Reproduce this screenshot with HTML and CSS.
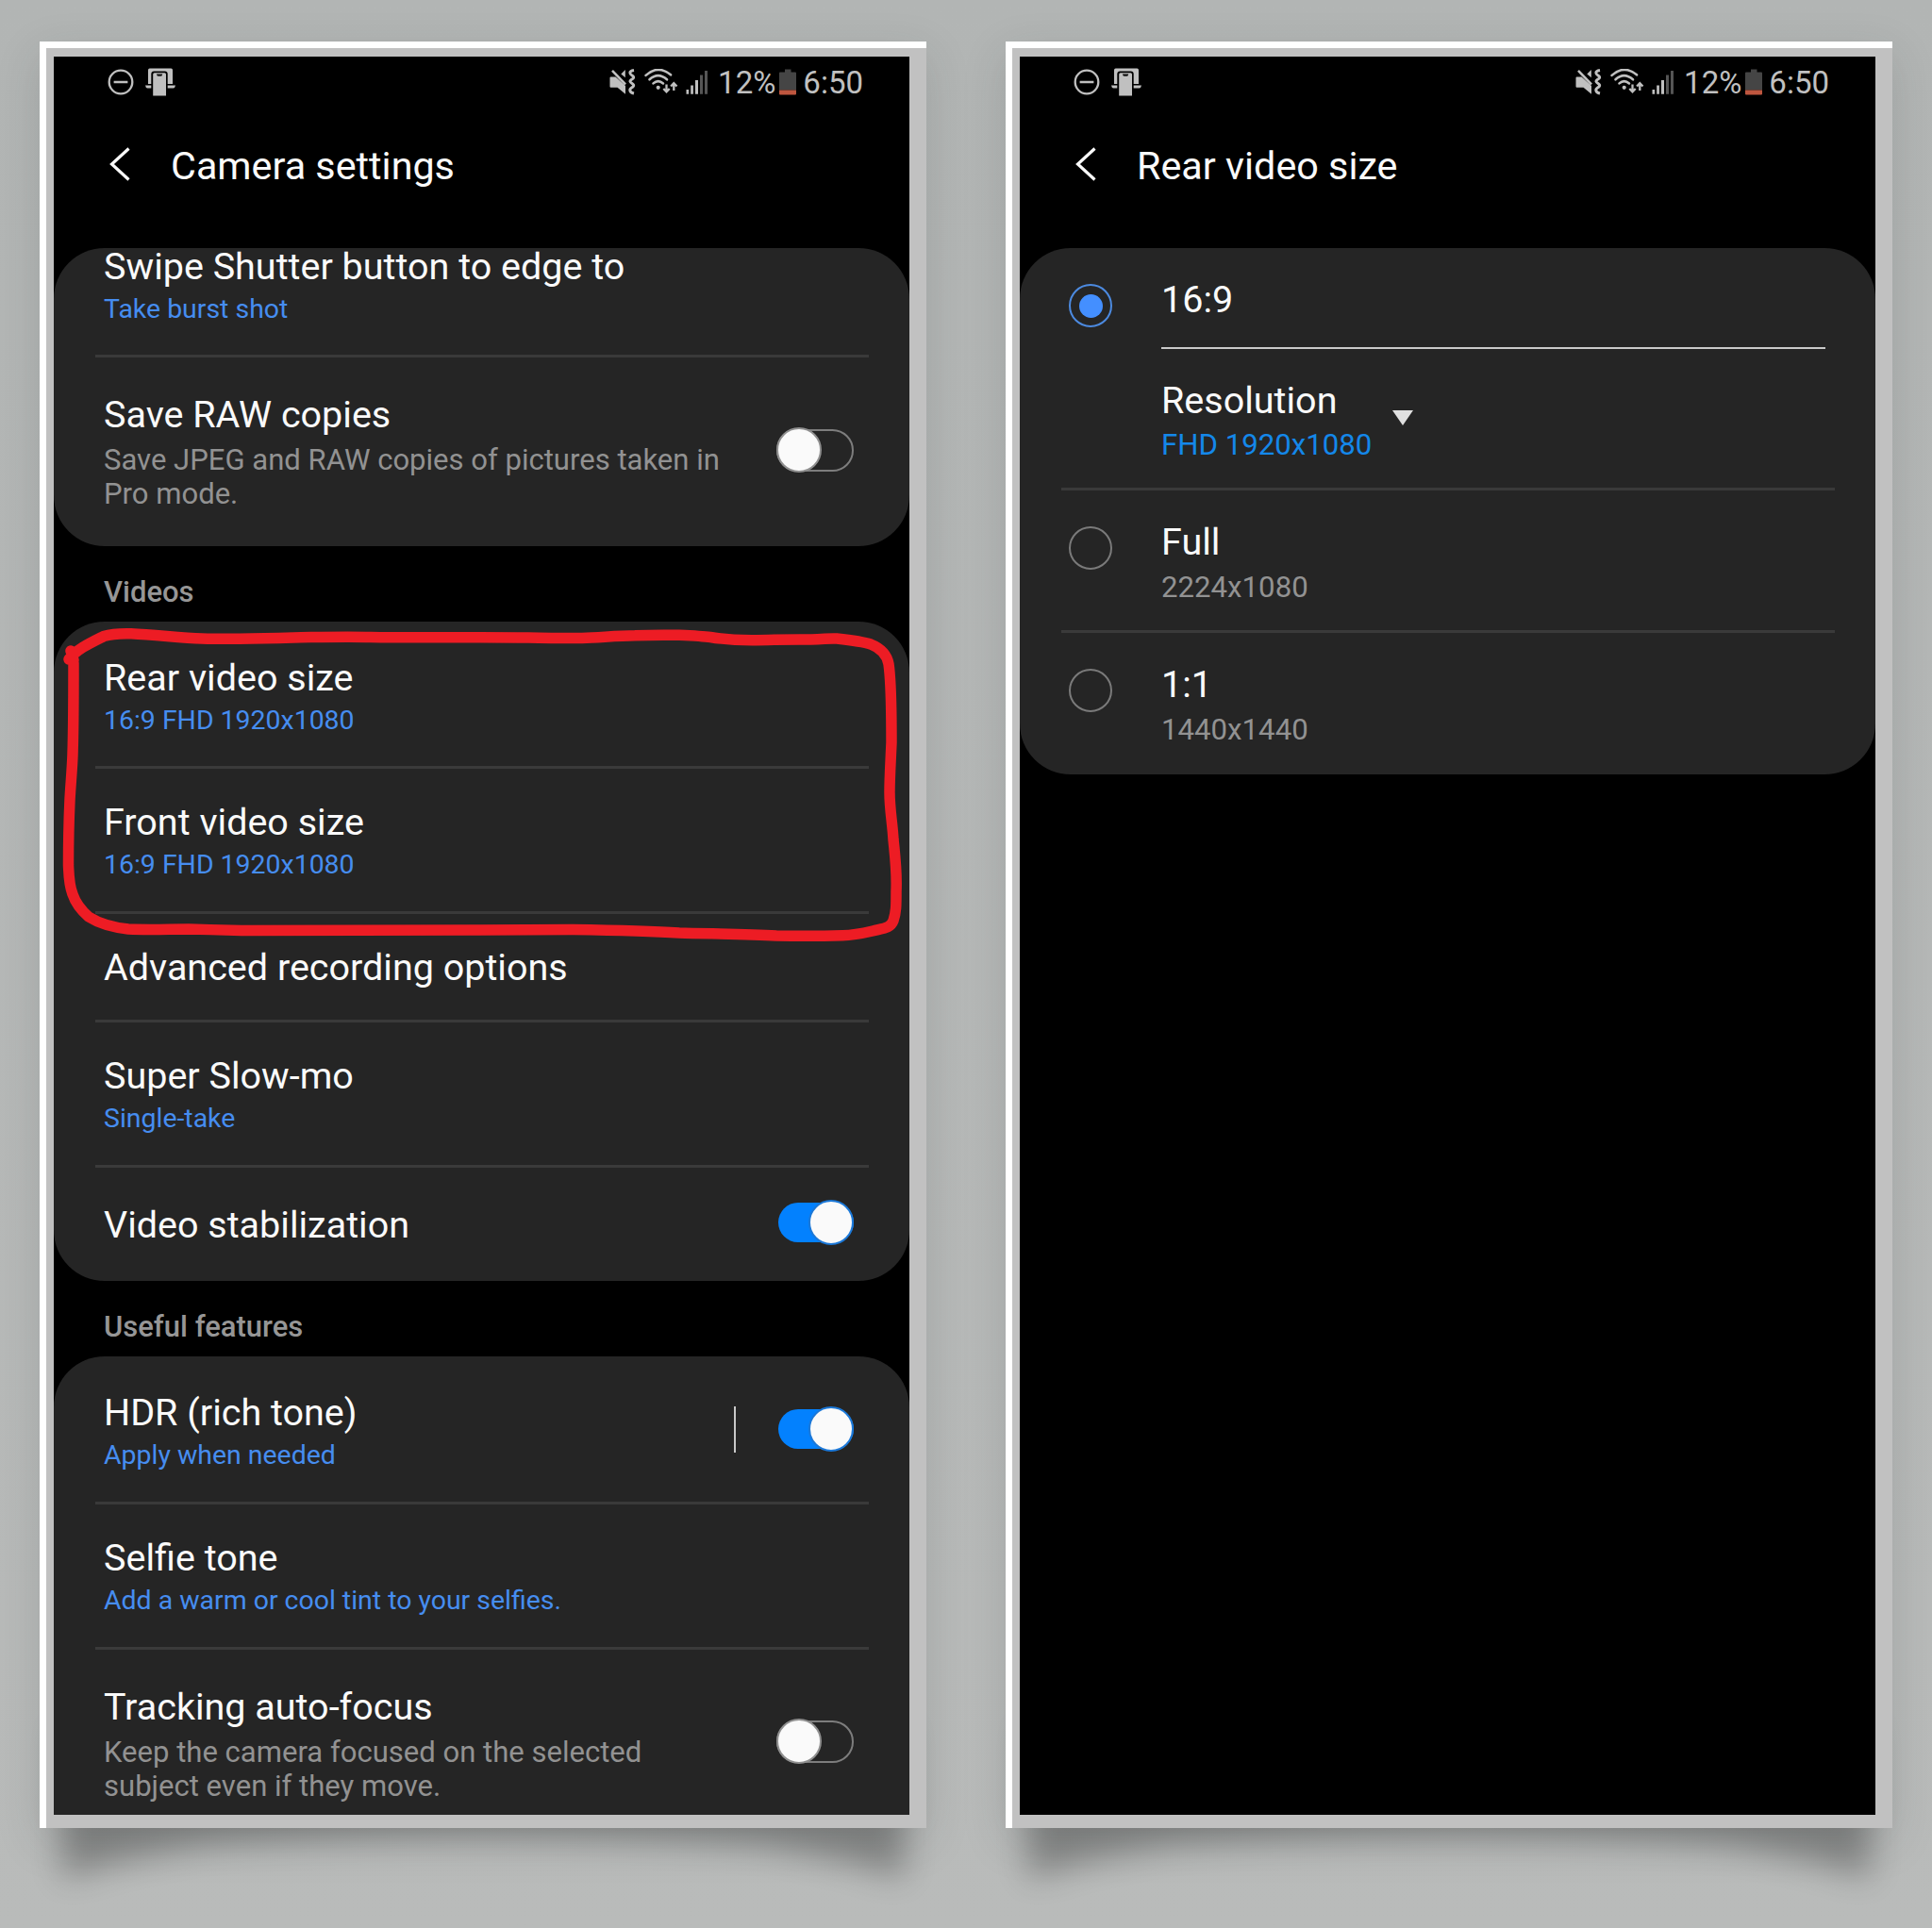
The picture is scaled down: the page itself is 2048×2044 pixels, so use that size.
FILE: index.html
```html
<!DOCTYPE html>
<html lang="en">
<head>
<meta charset="utf-8">
<title>Camera settings</title>
<link rel="stylesheet" href="styles.css">
</head>
<body>
<svg class="defs" width="0" height="0" aria-hidden="true">
  <defs>
    <filter id="soft" x="-20%" y="-50%" width="140%" height="200%"><feGaussianBlur stdDeviation="17"/></filter>
    <symbol id="i-dnd" viewBox="0 0 28 28">
      <circle cx="14" cy="14" r="12.3" fill="none" stroke="currentColor" stroke-width="2.3"/>
      <path d="M6.6 14h14.8" stroke="currentColor" stroke-width="2.5"/>
    </symbol>
    <symbol id="i-link" viewBox="0 0 32 30">
      <path d="M3 2.200Q3 0.500 4.700 0.500H27.300Q29 0.500 29 2.200V17H3Z" fill="currentColor"/>
      <path d="M0 18.500H32Q31.500 21.500 29.700 21.500H2.300Q0.500 21.500 0 18.500Z" fill="currentColor"/>
      <path d="M6.300 30V6.500Q6.300 3.500 9.200 3.500H20.800Q23.700 3.500 23.700 6.500V30Z" fill="#000"/>
      <path d="M8.200 29.500V6.800Q8.200 5.300 9.700 5.300H20.500Q22 5.300 22 6.800V29.500Z" fill="currentColor"/>
      <path d="M12 6.500H18.200Q18 8.800 16.500 8.800H13.700Q12.200 8.800 12 6.500Z" fill="#111"/>
    </symbol>
    <symbol id="i-mute" viewBox="0 0 28 28">
      <path d="M1.500 8.500H6.500L17 18V26.800L8.500 19.800H1.500Q0.500 19.800 0.500 18.800V9.500Q0.500 8.500 1.500 8.500Z" fill="currentColor"/>
      <path d="M16.800 1V9.300L12.300 5.600Z" fill="currentColor"/>
      <path d="M3 1.800L17 16.500" stroke="currentColor" stroke-width="2.600"/>
      <path d="M26 1.500C20 2.500 21.500 5.500 24 7C27 9 25.500 10 23.500 11.200C21 12.700 21.500 14 24 15.500C27 17.300 25.500 18.800 23.500 20C20.500 22 21.500 25 26 26" fill="none" stroke="currentColor" stroke-width="2.900"/>
    </symbol>
    <symbol id="i-wifi" viewBox="0 0 36 28">
      <g fill="none" stroke="currentColor" stroke-width="2.600" stroke-linecap="round">
        <path d="M1.600 6.900Q14.500 -4.800 28 6.300"/>
        <path d="M5.500 11.300Q14.500 3 24 11.300"/>
        <path d="M9.500 15.400Q14.700 10.800 20 15.400"/>
      </g>
      <circle cx="14.700" cy="19.800" r="2.100" fill="currentColor"/>
      <path d="M23.500 16.500v8M20.300 21l3.200 3.400L26.700 21M31.300 23v-8M28.100 18.500l3.200-3.400L34.500 18.500" fill="none" stroke="currentColor" stroke-width="2.300"/>
    </symbol>
    <symbol id="i-signal" viewBox="0 0 24 28">
      <path d="M.5 22h2.600v4.800H.5zM5.200 17.500h2.700v9.300H5.200zM10 12h3v14.800h-3z" fill="currentColor"/>
      <path d="M15 6.500h3v20.300h-3zM20 2h3v24.800h-3z" fill="#555"/>
    </symbol>
    <symbol id="i-battery" viewBox="0 0 18 28">
      <path d="M6 0.500h6.500V3.500H17Q18 3.500 18 4.500V22.500H0V4.500Q0 3.500 1 3.500H6Z" fill="#454545"/>
      <path d="M0 22.500H18V26.500Q18 27.500 17 27.500H1Q0 27.500 0 26.500Z" fill="#be563f"/>
    </symbol>
    <symbol id="i-back" viewBox="0 0 24 38">
      <path d="M21.500 2.500L3.500 19L21.500 35.500" fill="none" stroke="#fafafa" stroke-width="3.200"/>
    </symbol>
  </defs>
</svg>

<main class="board">
  <section class="half">
    <svg class="shadow" viewBox="0 0 1024 240" aria-hidden="true"><path d="M66 0H958V162Q900 140 800 124Q512 104 224 124Q124 140 66 162Z" filter="url(#soft)"/></svg>
    <div class="frame">
      <div class="screen">
        <div class="status">
          <div class="status-left"><svg class="dnd"><use href="#i-dnd"/></svg><svg class="link"><use href="#i-link"/></svg></div>
          <div class="status-right"><svg class="mute"><use href="#i-mute"/></svg><svg class="wifi"><use href="#i-wifi"/></svg><svg class="signal"><use href="#i-signal"/></svg><span class="percent">12%</span><svg class="battery"><use href="#i-battery"/></svg><span>6:50</span></div>
        </div>
        <header class="bar"><svg class="back"><use href="#i-back"/></svg><h1>Camera settings</h1></header>

        <div class="card">
          <div class="row row-cut"><div class="text"><h2>Swipe Shutter button to edge to</h2><p class="value">Take burst shot</p></div></div>
          <div class="row row-raw"><div class="text"><h2>Save RAW copies</h2><p class="hint">Save JPEG and RAW copies of pictures taken in Pro mode.</p></div><span class="switch"></span></div>
        </div>
        <h3 class="section">Videos</h3>
        <div class="card">
          <div class="row row-first"><div class="text"><h2>Rear video size</h2><p class="value">16:9 FHD 1920x1080</p></div></div>
          <div class="row row-two"><div class="text"><h2>Front video size</h2><p class="value">16:9 FHD 1920x1080</p></div></div>
          <div class="row row-one"><div class="text"><h2>Advanced recording options</h2></div></div>
          <div class="row row-two"><div class="text"><h2>Super Slow-mo</h2><p class="value">Single-take</p></div></div>
          <div class="row row-toggle"><div class="text"><h2>Video stabilization</h2></div><span class="switch on"></span></div>
        </div>
        <h3 class="section">Useful features</h3>
        <div class="card card-open">
          <div class="row row-first"><div class="text"><h2>HDR (rich tone)</h2><p class="value">Apply when needed</p></div><span class="rule"></span><span class="switch on"></span></div>
          <div class="row row-two"><div class="text"><h2>Selfie tone</h2><p class="value">Add a warm or cool tint to your selfies.</p></div></div>
          <div class="row row-track"><div class="text"><h2>Tracking auto-focus</h2><p class="hint">Keep the camera focused on the selected subject even if they move.</p></div><span class="switch"></span></div>
        </div>
      </div>
    </div>
    <svg class="marker" viewBox="60 660 900 345" aria-hidden="true">
      <path d="M75 690L78 700M73 699C82 688 95 682 110 674.500C118 672 128 671.500 139 671.800C165 673 190 676 214 677C245 678 280 677 311 676C340 675.500 365 674.500 393 675.500C450 676.500 500 675 560 676C580 676.500 600 676.500 617 676.500C640 675.500 655 674 673 673.800C690 673 705 673 720 673.300C735 674 745 674.500 753 675.500C768 678 782 678.700 797 678.700C820 678.700 830 677.500 860 678C875 677.500 880 676.500 887 677C905 679 914 680 923 683C933 687 940 693 942 704C945 725 945 755 945 787C944 810 943 825 943 840C943 858 946 872 947 890C949 910 951 925 950 945C950 960 950 967 947 976C944 984 937 984 925 987C912 990 905 991.500 893 991.700C870 992.500 845 992.500 823 992C790 990 750 990 720 989C690 987 640 986 607 985.500C490 986 370 987 257 986.500C235 986 220 985.500 200 985C180 985 158 986 136 985C118 983 105 979 94 972C86 965 80 957 77 948C73 938 73 928 72.500 917C72.500 895 73 870 74 848C75 830 76.500 815 77 800C78 770 78 735 78 703"/>
    </svg>
  </section>

  <section class="half">
    <svg class="shadow" viewBox="0 0 1024 240" aria-hidden="true"><path d="M66 0H958V162Q900 140 800 124Q512 104 224 124Q124 140 66 162Z" filter="url(#soft)"/></svg>
    <div class="frame">
      <div class="screen">
        <div class="status">
          <div class="status-left"><svg class="dnd"><use href="#i-dnd"/></svg><svg class="link"><use href="#i-link"/></svg></div>
          <div class="status-right"><svg class="mute"><use href="#i-mute"/></svg><svg class="wifi"><use href="#i-wifi"/></svg><svg class="signal"><use href="#i-signal"/></svg><span class="percent">12%</span><svg class="battery"><use href="#i-battery"/></svg><span>6:50</span></div>
        </div>
        <header class="bar"><svg class="back"><use href="#i-back"/></svg><h1>Rear video size</h1></header>

        <div class="card">
          <div class="option option-open">
            <span class="radio checked"></span>
            <div class="option-body">
              <div class="choice"><h2>16:9</h2></div>
              <div class="resolution">
                <div><h2>Resolution</h2><p class="size picked">FHD 1920x1080</p></div>
                <svg class="caret" viewBox="0 0 22 16"><path d="M0 0H22L11 16Z" fill="#e0e0e0"/></svg>
              </div>
            </div>
          </div>
          <div class="option"><span class="radio"></span><div class="option-body"><h2>Full</h2><p class="size">2224x1080</p></div></div>
          <div class="option"><span class="radio"></span><div class="option-body"><h2>1:1</h2><p class="size">1440x1440</p></div></div>
        </div>
      </div>
    </div>
  </section>
</main>
</body>
</html>
```
FILE: styles.css
```css
*, *::before { box-sizing: border-box; margin: 0; padding: 0; }
body {
  width: 2048px;
  height: 2044px;
  overflow: hidden;
  background: linear-gradient(#b2b5b4, #b9bbba);
  font-family: Roboto, "Liberation Sans", sans-serif;
  color: #fafafa;
}
svg { display: block; flex: none; }
.defs { position: absolute; }
.board { display: grid; grid-template-columns: 1024px 1024px; height: 2044px; }
.half { position: relative; padding: 44px 42px 0; }
.shadow { position: absolute; left: 0; top: 1830px; width: 1024px; height: 240px; overflow: visible; fill: #000; opacity: .28; }
.frame {
  position: relative;
  width: 940px;
  height: 1894px;
  padding: 9px 18px 14px 8px;
  border-top: 7px solid #fff;
  border-left: 7px solid #fff;
  background: #c1c1c1;
  box-shadow: 0 14px 44px rgba(40, 50, 48, .15);
}
.screen { height: 1864px; background: #000; overflow: hidden; }

.status { display: flex; justify-content: space-between; height: 92px; padding: 7px 49px 0 57px; color: #c0c0c0; font-size: 33px; line-height: 42px; }
.status-left, .status-right { display: flex; align-items: center; height: 42px; }
.status svg { margin-top: -2px; }
.dnd { width: 28px; height: 28px; }
.link { width: 32px; height: 30px; margin-left: 12px; }
.mute { width: 28px; height: 28px; margin-right: 9px; }
.wifi { width: 36px; height: 28px; margin-right: 8px; }
.signal { width: 24px; height: 28px; margin-right: 10px; }
.battery { width: 18px; height: 28px; margin: 0 7px 0 4px; }

.bar { display: flex; height: 111px; padding-left: 58px; }
.back { width: 24px; height: 38px; margin-top: 3px; }
.bar h1 { margin-left: 42px; font-size: 41.3px; line-height: 48px; font-weight: 400; }

.card { border-radius: 54px; background: #252525; }
.card-open { height: 560px; }
h2 { font-size: 39.5px; line-height: 46px; font-weight: 400; white-space: nowrap; }
.value { margin-top: 5px; font-size: 28.45px; line-height: 34px; color: #468df0; white-space: nowrap; }
.hint { width: 668px; margin-top: 7px; font-size: 31.05px; line-height: 36px; color: #929292; }
.section { height: 80px; padding: 31px 0 0 53px; font-size: 31px; line-height: 36px; font-weight: 500; color: #969696; }

.row { position: relative; display: flex; height: 154px; margin: 0 43px 0 44px; padding: 34px 16px 0 9px; border-bottom: 3px solid #3a3a3a; }
.row:last-child { border-bottom: 0; }
.text { flex: 1; min-width: 0; }
.row-cut { height: 116px; padding-top: 0; }
.row-cut .text { margin-top: -3px; }
.row-raw { height: 200px; padding-top: 38px; }
.row-first { height: 156px; padding-top: 37px; }
.row-one { height: 115px; }
.row-toggle { height: 120px; padding-top: 38px; }
.card-open .row-first { height: 157px; }
.row-track { height: 190px; padding-top: 38px; }

.switch { position: relative; flex: none; width: 82px; height: 45px; margin-top: 38px; border: 2.500px solid #7d7d7d; border-radius: 23px; }
.switch::before { content: ""; position: absolute; left: -2.500px; top: -4px; width: 48px; height: 48px; border: 2.500px solid #8f8f8f; border-radius: 50%; background: #fafafa; }
.switch.on { width: 80px; height: 42px; border: 0; background: #0381fe; }
.switch.on::before { left: auto; right: 0; top: -3px; border-color: #1b78d8; }
.row-toggle .switch { margin-top: -1px; }
.row-first .switch { margin-top: 19px; }
.row-track .switch { margin-top: 37px; }
.rule { width: 2px; height: 49px; margin: 16px 45px 0 0; background: #c8c8c8; }

.option { display: flex; height: 151px; margin: 0 43px 0 44px; padding: 32px 0 0 8px; border-bottom: 3px solid #3a3a3a; }
.option:last-child { height: 150px; border-bottom: 0; }
.option-open { height: 257px; padding-top: 32px; }
.option-body { flex: 1; margin-left: 52px; }
.radio { display: flex; align-items: center; justify-content: center; flex: none; width: 46px; height: 46px; margin-top: 6px; border: 2px solid #7a7a7a; border-radius: 50%; }
.radio.checked { border-color: #4c8ae0; }
.radio.checked::before { content: ""; width: 25px; height: 25px; border-radius: 50%; background: #448fff; }
.choice { height: 75px; margin-right: 10px; border-bottom: 2px solid #c9c9c9; }
.resolution { display: flex; align-items: flex-start; gap: 22px; padding-top: 32px; }
.size { margin-top: 7px; font-size: 31.200px; line-height: 36px; color: #929292; }
.size.picked { margin-top: 6px; color: #1488ea; }
.caret { width: 22px; height: 16px; margin-top: 33px; }

/* hand-drawn highlight laid over the two video size rows */
.marker { position: absolute; left: 60px; top: 660px; width: 900px; height: 345px; overflow: visible; fill: none; stroke: #ed1c24; stroke-width: 11.500px; stroke-linecap: round; stroke-linejoin: round; }
```
